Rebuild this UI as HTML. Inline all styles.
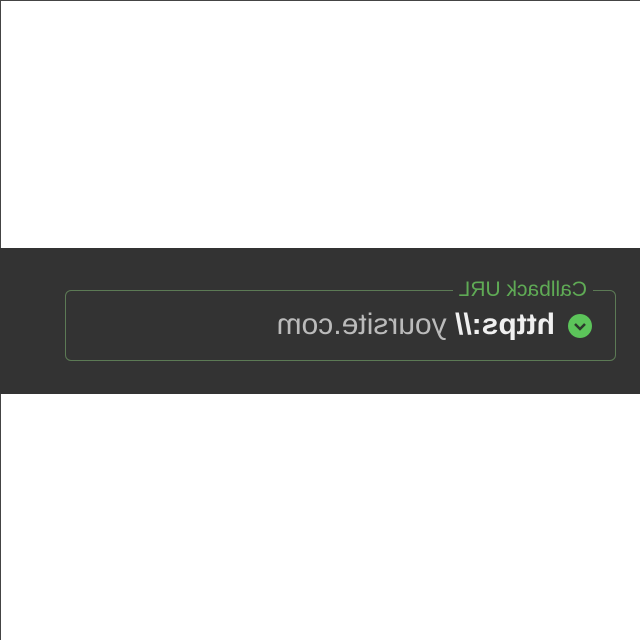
<!DOCTYPE html>
<html><head><style>
html,body{margin:0;padding:0;width:640px;height:640px;background:#fff;overflow:hidden}
.frame{position:absolute;left:0;top:0;width:639px;height:639px;border-left:1px solid #444;border-top:1px solid #444}
.band{position:absolute;left:0;top:248px;width:640px;height:146px;background:#333;transform:scaleX(-1)}
.box{position:absolute;left:24px;top:42px;width:549px;height:69px;border:1.5px solid #5c7a55;border-radius:6px}
.lab{position:absolute;left:22px;top:-14px;background:#333;padding:0 6px;color:#5faa55;font:21px "Liberation Sans",sans-serif;line-height:26px}
.ic{position:absolute;left:23px;top:23px;width:24px;height:24px;border-radius:50%;background:#5cc45a}
.txt{position:absolute;left:60px;top:17px;font:30px "Liberation Sans",sans-serif;white-space:nowrap;line-height:34px}
.b{color:#f0f0f0;font-weight:bold}.g{color:#bbb}
</style></head><body>
<div class="frame"></div>
<div class="band"><div class="box">
<div class="lab">Callback URL</div>
<div class="ic"><svg width="24" height="24"><path d="M7 10 L12 15 L17 10" stroke="#2c3a2c" stroke-width="2.5" fill="none"/></svg></div>
<div class="txt"><span class="b">https://</span> <span class="g">yoursite.com</span></div>
</div></div>
</body></html>
